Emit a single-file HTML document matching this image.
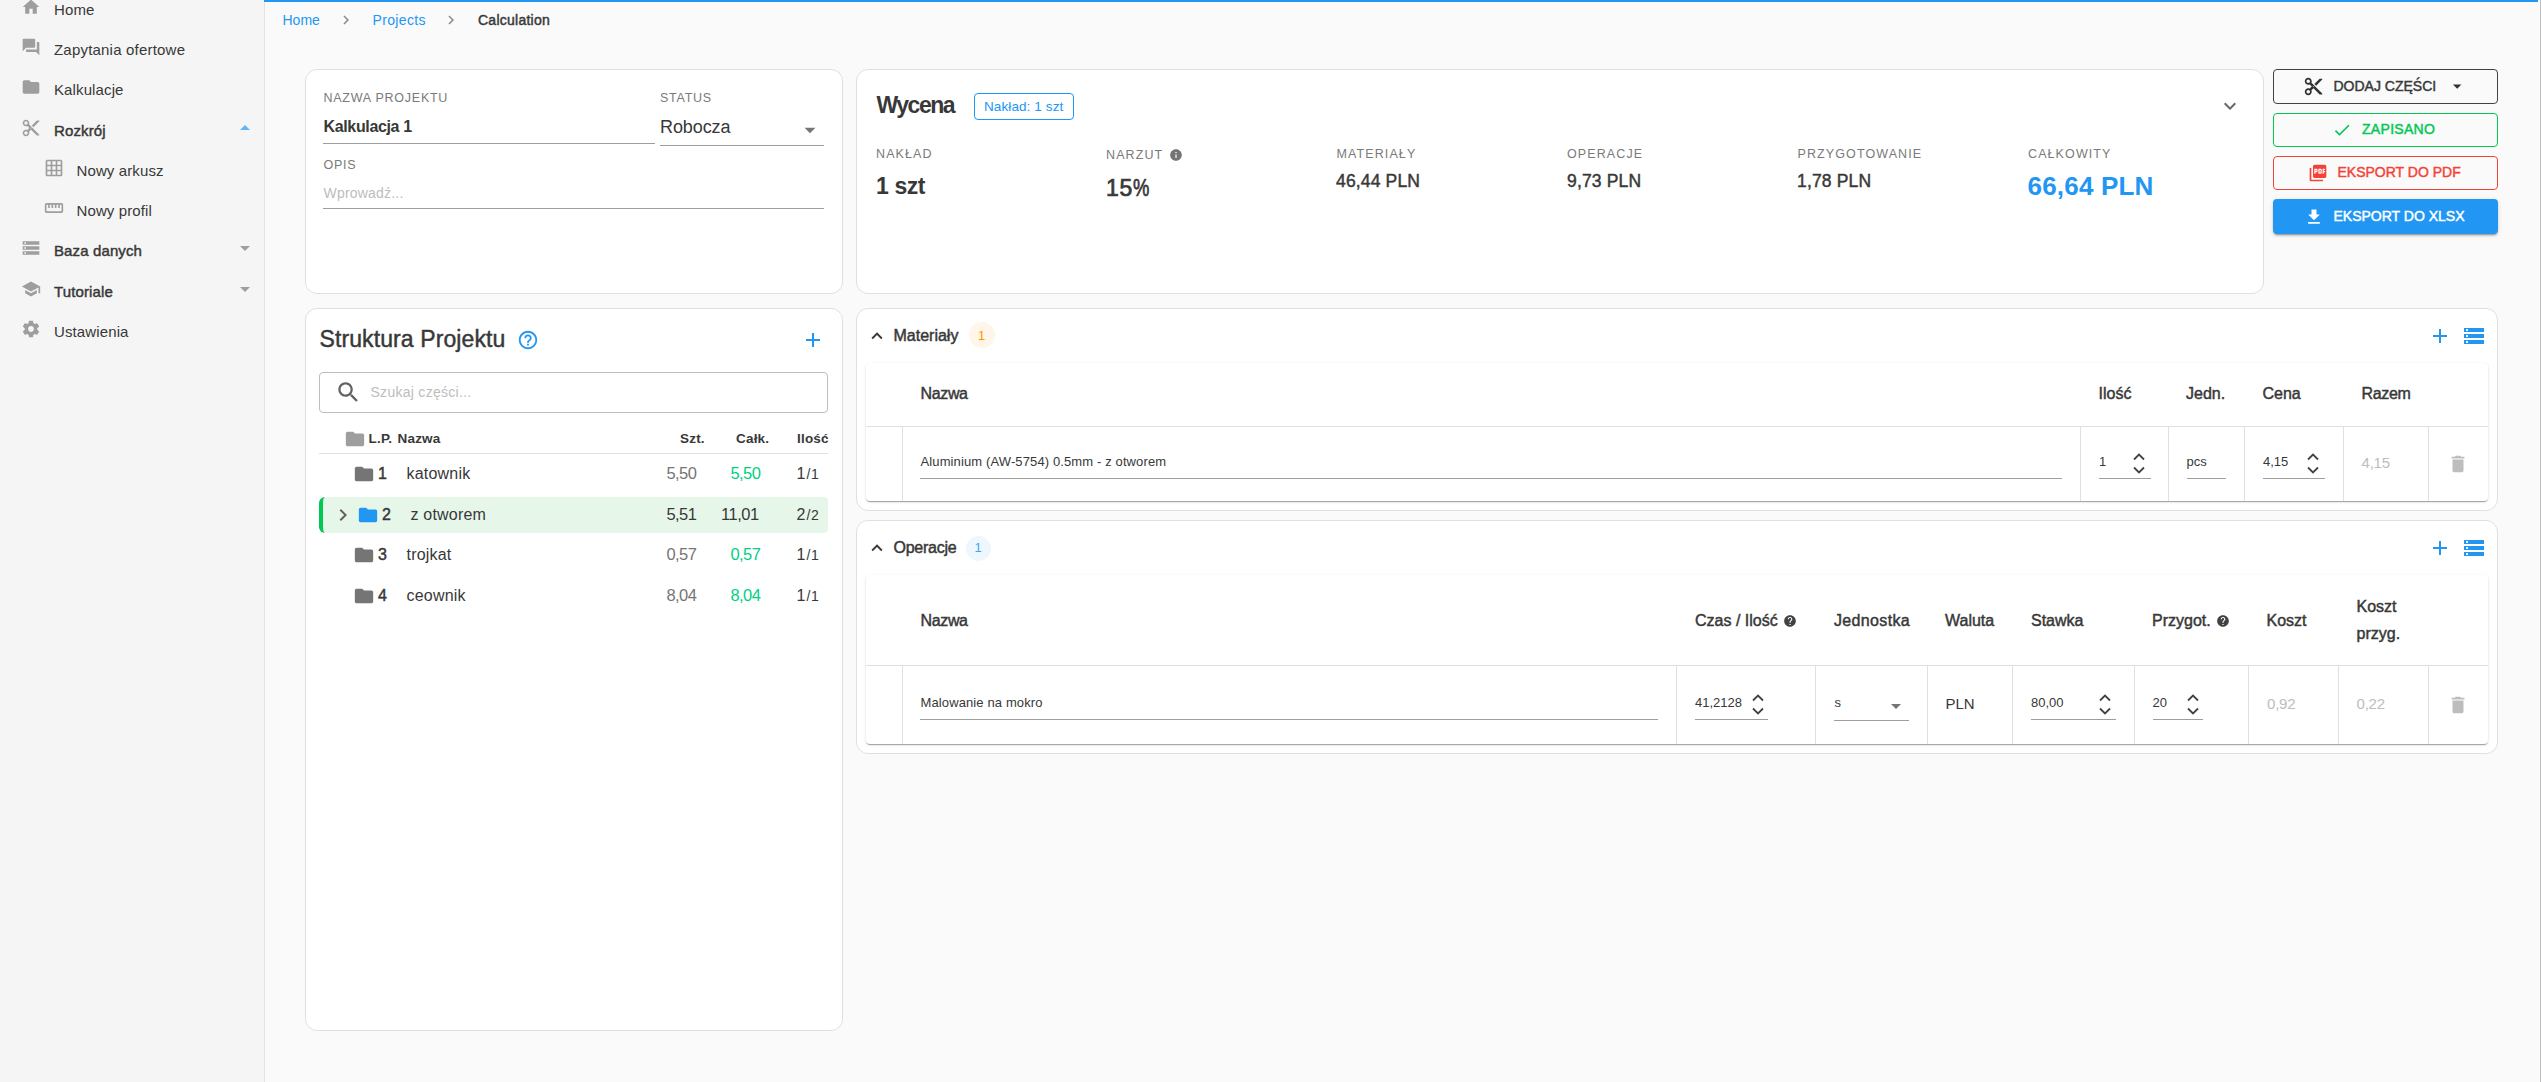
<!DOCTYPE html>
<html><head><meta charset="utf-8"><title>Calculation</title>
<style>
html,body{margin:0;padding:0;width:2541px;height:1082px;overflow:hidden;background:#fafafa;}
body{position:relative;font-family:"Liberation Sans",sans-serif;}
.t{position:absolute;white-space:nowrap;}
.b{position:absolute;}
</style></head><body>
<div class="b" style="left:0px;top:0px;width:264px;height:1082px;background:#f5f5f5;"></div>
<div class="b" style="left:264px;top:0px;width:1px;height:1082px;background:#e4e4e4;"></div>
<svg class="b" style="left:21px;top:-3.5px;" width="20" height="20" viewBox="0 0 24 24"><path fill="#9e9e9e" d="M10 20v-6h4v6h5v-8h3L12 3 2 12h3v8z"/></svg>
<div class="t " style="left:54px;top:0.80px;font-size:15px;line-height:18px;font-weight:400;color:#383838;letter-spacing:0.12px;">Home</div>
<svg class="b" style="left:21px;top:36.5px;" width="20" height="20" viewBox="0 0 24 24"><path fill="#9e9e9e" d="M21 6h-2v9H6v2c0 .55.45 1 1 1h11l4 4V7c0-.55-.45-1-1-1zm-4 6V3c0-.55-.45-1-1-1H3c-.55 0-1 .45-1 1v14l4-4h10c.55 0 1-.45 1-1z"/></svg>
<div class="t " style="left:54px;top:40.80px;font-size:15px;line-height:18px;font-weight:400;color:#383838;letter-spacing:0.2px;">Zapytania ofertowe</div>
<svg class="b" style="left:21px;top:76.5px;" width="20" height="20" viewBox="0 0 24 24"><path fill="#9e9e9e" d="M10 4H4c-1.1 0-1.99.9-1.99 2L2 18c0 1.1.9 2 2 2h16c1.1 0 2-.9 2-2V8c0-1.1-.9-2-2-2h-8l-2-2z"/></svg>
<div class="t " style="left:54px;top:80.80px;font-size:15px;line-height:18px;font-weight:400;color:#383838;letter-spacing:0.12px;">Kalkulacje</div>
<svg class="b" style="left:21px;top:117.5px;" width="20" height="20" viewBox="0 0 24 24"><path fill="#9e9e9e" d="M9.64 7.64c.23-.5.36-1.05.36-1.64 0-2.21-1.79-4-4-4S2 3.79 2 6s1.79 4 4 4c.59 0 1.14-.13 1.64-.36L10 12l-2.36 2.36C7.14 14.13 6.59 14 6 14c-2.21 0-4 1.79-4 4s1.79 4 4 4 4-1.79 4-4c0-.59-.13-1.14-.36-1.64L12 14l7 7h3v-1L9.64 7.64zM6 8c-1.1 0-2-.89-2-2s.9-2 2-2 2 .89 2 2-.9 2-2 2zm0 12c-1.1 0-2-.89-2-2s.9-2 2-2 2 .89 2 2-.9 2-2 2zm6-7.5c-.28 0-.5-.22-.5-.5s.22-.5.5-.5.5.22.5.5-.22.5-.5.5zM19 3l-6 6 2 2 7-7V3z"/></svg>
<div class="t " style="left:54px;top:121.80px;font-size:15px;line-height:18px;font-weight:400;color:#383838;letter-spacing:0.12px;-webkit-text-stroke:0.45px #383838;">Rozkrój</div>
<svg class="b" style="left:44px;top:157.5px;" width="20" height="20" viewBox="0 0 24 24"><path fill="#9e9e9e" d="M20 2H4c-1.1 0-2 .9-2 2v16c0 1.1.9 2 2 2h16c1.1 0 2-.9 2-2V4c0-1.1-.9-2-2-2zM8 20H4v-4h4v4zm0-6H4v-4h4v4zm0-6H4V4h4v4zm6 12h-4v-4h4v4zm0-6h-4v-4h4v4zm0-6h-4V4h4v4zm6 12h-4v-4h4v4zm0-6h-4v-4h4v4zm0-6h-4V4h4v4z"/></svg>
<div class="t " style="left:76.5px;top:161.80px;font-size:15px;line-height:18px;font-weight:400;color:#383838;letter-spacing:0.12px;">Nowy arkusz</div>
<svg class="b" style="left:44px;top:197.5px;" width="20" height="20" viewBox="0 0 24 24"><path fill="#9e9e9e" d="M21 6H3c-1.1 0-2 .9-2 2v8c0 1.1.9 2 2 2h18c1.1 0 2-.9 2-2V8c0-1.1-.9-2-2-2zm0 10H3V8h2v4h2V8h2v4h2V8h2v4h2V8h2v4h2V8h2v8z"/></svg>
<div class="t " style="left:76.5px;top:201.80px;font-size:15px;line-height:18px;font-weight:400;color:#383838;letter-spacing:0.12px;">Nowy profil</div>
<svg class="b" style="left:21px;top:237.5px;" width="20" height="20" viewBox="0 0 24 24"><path fill="#9e9e9e" d="M2 20h20v-4H2v4zm2-3h2v2H4v-2zM2 4v4h20V4H2zm4 3H4V5h2v2zm-4 7h20v-4H2v4zm2-3h2v2H4v-2z"/></svg>
<div class="t " style="left:54px;top:241.80px;font-size:15px;line-height:18px;font-weight:400;color:#383838;letter-spacing:0.12px;-webkit-text-stroke:0.45px #383838;">Baza danych</div>
<svg class="b" style="left:21px;top:278.5px;" width="20" height="20" viewBox="0 0 24 24"><path fill="#9e9e9e" d="M5 13.18v4L12 21l7-3.82v-4L12 17l-7-3.82zM12 3L1 9l11 6 9-4.91V17h2V9L12 3z"/></svg>
<div class="t " style="left:54px;top:282.80px;font-size:15px;line-height:18px;font-weight:400;color:#383838;letter-spacing:0.12px;-webkit-text-stroke:0.45px #383838;">Tutoriale</div>
<svg class="b" style="left:21px;top:318.5px;" width="20" height="20" viewBox="0 0 24 24"><path fill="#9e9e9e" d="M19.43 12.98c.04-.32.07-.64.07-.98s-.03-.66-.07-.98l2.11-1.65c.19-.15.24-.42.12-.64l-2-3.46c-.12-.22-.39-.3-.61-.22l-2.49 1c-.52-.4-1.08-.73-1.69-.98l-.38-2.65C14.46 2.18 14.25 2 14 2h-4c-.25 0-.46.18-.49.42l-.38 2.65c-.61.25-1.17.59-1.69.98l-2.49-1c-.23-.09-.49 0-.61.22l-2 3.46c-.13.22-.07.49.12.64l2.11 1.65c-.04.32-.07.65-.07.98s.03.66.07.98l-2.11 1.65c-.19.15-.24.42-.12.64l2 3.46c.12.22.39.3.61.22l2.49-1c.52.4 1.08.73 1.69.98l.38 2.65c.03.24.24.42.49.42h4c.25 0 .46-.18.49-.42l.38-2.65c.61-.25 1.17-.59 1.69-.98l2.49 1c.23.09.49 0 .61-.22l2-3.46c.12-.22.07-.49-.12-.64l-2.11-1.65zM12 15.5c-1.93 0-3.5-1.57-3.5-3.5s1.57-3.5 3.5-3.5 3.5 1.57 3.5 3.5-1.57 3.5-3.5 3.5z"/></svg>
<div class="t " style="left:54px;top:322.80px;font-size:15px;line-height:18px;font-weight:400;color:#383838;letter-spacing:0.12px;">Ustawienia</div>
<svg class="b" style="left:233px;top:115.5px;" width="24" height="24" viewBox="0 0 24 24"><path fill="#64b5f6" d="M7 14l5-5 5 5z"/></svg>
<svg class="b" style="left:233px;top:236px;" width="24" height="24" viewBox="0 0 24 24"><path fill="#9e9e9e" d="M7 10l5 5 5-5z"/></svg>
<svg class="b" style="left:233px;top:277px;" width="24" height="24" viewBox="0 0 24 24"><path fill="#9e9e9e" d="M7 10l5 5 5-5z"/></svg>
<div class="b" style="left:265px;top:0px;width:2276px;height:1082px;background:#fafafa;"></div>
<div class="b" style="left:264px;top:0px;width:2274px;height:2px;background:#2196f3;"></div>
<div class="b" style="left:2540px;top:0px;width:1px;height:1082px;background:#bfbfbf;"></div>
<div class="t " style="left:282.5px;top:11.65px;font-size:14px;line-height:17px;font-weight:400;color:#2196f3;letter-spacing:0px;">Home</div>
<svg class="b" style="left:337px;top:11px;" width="18" height="18" viewBox="0 0 24 24"><path fill="#8a8a8a" d="M10 6L8.59 7.41 13.17 12l-4.58 4.59L10 18l6-6z"/></svg>
<div class="t " style="left:372.5px;top:11.65px;font-size:14px;line-height:17px;font-weight:400;color:#2196f3;letter-spacing:0.35px;">Projects</div>
<svg class="b" style="left:442px;top:11px;" width="18" height="18" viewBox="0 0 24 24"><path fill="#8a8a8a" d="M10 6L8.59 7.41 13.17 12l-4.58 4.59L10 18l6-6z"/></svg>
<div class="t " style="left:478px;top:11.65px;font-size:14px;line-height:17px;font-weight:400;color:#383838;letter-spacing:0.25px;-webkit-text-stroke:0.45px #383838;">Calculation</div>
<div class="b" style="left:305px;top:69px;width:538px;height:225px;background:#fff;border:1px solid #e0e0e0;border-radius:12px;box-sizing:border-box;"></div>
<div class="t " style="left:323.5px;top:91.17px;font-size:12.5px;line-height:15px;font-weight:400;color:#7a7a7a;letter-spacing:0.75px;">NAZWA PROJEKTU</div>
<div class="t " style="left:323.5px;top:116.96px;font-size:16px;line-height:19px;font-weight:700;color:#383838;letter-spacing:-0.35px;">Kalkulacja 1</div>
<div class="b" style="left:323px;top:143px;width:332px;height:1px;background:#9e9e9e;"></div>
<div class="t " style="left:660px;top:91.17px;font-size:12.5px;line-height:15px;font-weight:400;color:#7a7a7a;letter-spacing:0.75px;">STATUS</div>
<div class="t " style="left:660px;top:115.76px;font-size:18px;line-height:22px;font-weight:400;color:#383838;letter-spacing:-0.1px;">Robocza</div>
<svg class="b" style="left:797.3px;top:117px;" width="26" height="26" viewBox="0 0 24 24"><path fill="#757575" d="M7 10l5 5 5-5z"/></svg>
<div class="b" style="left:660px;top:145px;width:164px;height:1px;background:#9e9e9e;"></div>
<div class="t " style="left:323.5px;top:158.17px;font-size:12.5px;line-height:15px;font-weight:400;color:#7a7a7a;letter-spacing:0.75px;">OPIS</div>
<div class="t " style="left:323.5px;top:184.65px;font-size:14px;line-height:17px;font-weight:400;color:#bdbdbd;letter-spacing:0.2px;">Wprowadź...</div>
<div class="b" style="left:323px;top:208px;width:501px;height:1px;background:#9e9e9e;"></div>
<div class="b" style="left:856px;top:69px;width:1408px;height:225px;background:#fff;border:1px solid #e0e0e0;border-radius:12px;box-sizing:border-box;"></div>
<div class="t " style="left:876.5px;top:91.03px;font-size:23px;line-height:28px;font-weight:700;color:#383838;letter-spacing:-1.5px;">Wycena</div>
<div class="b" style="left:974px;top:93px;width:100px;height:27px;border:1px solid #2196f3;border-radius:4px;box-sizing:border-box;"></div>
<div class="t " style="left:984px;top:98.92px;font-size:13.5px;line-height:16px;font-weight:400;color:#2196f3;letter-spacing:0.1px;">Nakład: 1 szt</div>
<svg class="b" style="left:2218px;top:94px;" width="24" height="24" viewBox="0 0 24 24"><path fill="#666" d="M16.59 8.59L12 13.17 7.41 8.59 6 10l6 6 6-6z"/></svg>
<div class="t " style="left:876px;top:146.77px;font-size:12.5px;line-height:15px;font-weight:400;color:#7a7a7a;letter-spacing:1.1px;">NAKŁAD</div>
<div class="t " style="left:1106px;top:147.77px;font-size:12.5px;line-height:15px;font-weight:400;color:#7a7a7a;letter-spacing:1.1px;">NARZUT</div>
<div class="t " style="left:1336.5px;top:146.77px;font-size:12.5px;line-height:15px;font-weight:400;color:#7a7a7a;letter-spacing:1.1px;">MATERIAŁY</div>
<div class="t " style="left:1567px;top:146.77px;font-size:12.5px;line-height:15px;font-weight:400;color:#7a7a7a;letter-spacing:1.1px;">OPERACJE</div>
<div class="t " style="left:1797.5px;top:146.77px;font-size:12.5px;line-height:15px;font-weight:400;color:#7a7a7a;letter-spacing:1.1px;">PRZYGOTOWANIE</div>
<div class="t " style="left:2028px;top:146.77px;font-size:12.5px;line-height:15px;font-weight:400;color:#7a7a7a;letter-spacing:1.1px;">CAŁKOWITY</div>
<svg class="b" style="left:1169px;top:148px;" width="14" height="14" viewBox="0 0 24 24"><path fill="#757575" d="M12 2C6.48 2 2 6.48 2 12s4.48 10 10 10 10-4.48 10-10S17.52 2 12 2zm1 15h-2v-6h2v6zm0-8h-2V7h2v2z"/></svg>
<div class="t " style="left:876px;top:171.53px;font-size:23px;line-height:28px;font-weight:700;color:#383838;letter-spacing:-0.4px;">1 szt</div>
<div class="t " style="left:1106px;top:173.53px;font-size:23px;line-height:28px;font-weight:400;color:#383838;letter-spacing:0.8px;-webkit-text-stroke:0.7px #383838;">15<span style="display:inline-block;transform:scaleX(0.8);transform-origin:0 0;letter-spacing:0">%</span></div>
<div class="t " style="left:1336px;top:171.44px;font-size:17.5px;line-height:21px;font-weight:400;color:#383838;letter-spacing:0.15px;-webkit-text-stroke:0.45px #383838;">46,44 PLN</div>
<div class="t " style="left:1567px;top:171.44px;font-size:17.5px;line-height:21px;font-weight:400;color:#383838;letter-spacing:0.15px;-webkit-text-stroke:0.45px #383838;">9,73 PLN</div>
<div class="t " style="left:1797px;top:171.44px;font-size:17.5px;line-height:21px;font-weight:400;color:#383838;letter-spacing:0.15px;-webkit-text-stroke:0.45px #383838;">1,78 PLN</div>
<div class="t " style="left:2027.5px;top:170.99px;font-size:26px;line-height:31px;font-weight:700;color:#2196f3;letter-spacing:0.2px;">66,64 PLN</div>
<div class="b" style="left:2273px;top:69px;width:225px;height:35px;border-radius:4px;box-sizing:border-box;border:1px solid #424242;"></div>
<svg class="b" style="left:2303px;top:76px;" width="21" height="21" viewBox="0 0 24 24"><path fill="#333" d="M9.64 7.64c.23-.5.36-1.05.36-1.64 0-2.21-1.79-4-4-4S2 3.79 2 6s1.79 4 4 4c.59 0 1.14-.13 1.64-.36L10 12l-2.36 2.36C7.14 14.13 6.59 14 6 14c-2.21 0-4 1.79-4 4s1.79 4 4 4 4-1.79 4-4c0-.59-.13-1.14-.36-1.64L12 14l7 7h3v-1L9.64 7.64zM6 8c-1.1 0-2-.89-2-2s.9-2 2-2 2 .89 2 2-.9 2-2 2zm0 12c-1.1 0-2-.89-2-2s.9-2 2-2 2 .89 2 2-.9 2-2 2zm6-7.5c-.28 0-.5-.22-.5-.5s.22-.5.5-.5.5.22.5.5-.22.5-.5.5zM19 3l-6 6 2 2 7-7V3z"/></svg>
<div class="t " style="left:2333.5px;top:77.65px;font-size:14px;line-height:17px;font-weight:400;color:#383838;letter-spacing:0px;-webkit-text-stroke:0.45px #383838;">DODAJ CZĘŚCI</div>
<svg class="b" style="left:2446.5px;top:75.5px;" width="20.4" height="20.4" viewBox="0 0 24 24"><path fill="#333" d="M7 10l5 5 5-5z"/></svg>
<div class="b" style="left:2273px;top:113px;width:225px;height:34px;border-radius:4px;box-sizing:border-box;border:1px solid #00c853;"></div>
<svg class="b" style="left:2332px;top:120px;" width="20" height="20" viewBox="0 0 24 24"><path fill="#00c853" d="M9 16.17L4.83 12l-1.42 1.41L9 19 21 7l-1.41-1.41z"/></svg>
<div class="t " style="left:2362px;top:120.65px;font-size:14px;line-height:17px;font-weight:400;color:#00c853;letter-spacing:0.3px;-webkit-text-stroke:0.45px #00c853;">ZAPISANO</div>
<div class="b" style="left:2273px;top:156px;width:225px;height:34px;border-radius:4px;box-sizing:border-box;border:1px solid #f44336;"></div>
<svg class="b" style="left:2308px;top:163px;" width="20" height="20" viewBox="0 0 24 24"><path fill="#f44336" d="M20 2H8c-1.1 0-2 .9-2 2v12c0 1.1.9 2 2 2h12c1.1 0 2-.9 2-2V4c0-1.1-.9-2-2-2zm-8.5 7.5c0 .83-.67 1.5-1.5 1.5H9v2H7.5V7H10c.83 0 1.5.67 1.5 1.5v1zm5 2c0 .83-.67 1.5-1.5 1.5h-2.5V7H15c.83 0 1.5.67 1.5 1.5v3zm4-3H19v1h1.5V11H19v2h-1.5V7h3v1.5zM9 9.5h1v-1H9v1zM4 6H2v14c0 1.1.9 2 2 2h14v-2H4V6zm10 5.5h1v-3h-1v3z"/></svg>
<div class="t " style="left:2337.5px;top:164.15px;font-size:14px;line-height:17px;font-weight:400;color:#f44336;letter-spacing:0px;-webkit-text-stroke:0.45px #f44336;">EKSPORT DO PDF</div>
<div class="b" style="left:2273px;top:199px;width:225px;height:35px;border-radius:4px;box-sizing:border-box;background:#2196f3;box-shadow:0px 3px 1px -2px rgba(0,0,0,0.2),0px 2px 2px 0px rgba(0,0,0,0.14),0px 1px 5px 0px rgba(0,0,0,0.12);"></div>
<svg class="b" style="left:2304px;top:207px;" width="20" height="20" viewBox="0 0 24 24"><path fill="#fff" d="M19 9h-4V3H9v6H5l7 7 7-7zM5 18v2h14v-2H5z"/></svg>
<div class="t " style="left:2333.5px;top:207.65px;font-size:14px;line-height:17px;font-weight:400;color:#fff;letter-spacing:0px;-webkit-text-stroke:0.45px #fff;">EKSPORT DO XLSX</div>
<div class="b" style="left:305px;top:308px;width:538px;height:723px;background:#fff;border:1px solid #e0e0e0;border-radius:12px;box-sizing:border-box;"></div>
<div class="t " style="left:319.5px;top:324.53px;font-size:23px;line-height:28px;font-weight:400;color:#383838;letter-spacing:0.1px;-webkit-text-stroke:0.45px #383838;">Struktura Projektu</div>
<svg class="b" style="left:517px;top:329px;" width="22" height="22" viewBox="0 0 24 24"><path fill="#2196f3" d="M11 18h2v-2h-2v2zm1-16C6.48 2 2 6.48 2 12s4.48 10 10 10 10-4.48 10-10S17.52 2 12 2zm0 18c-4.41 0-8-3.59-8-8s3.59-8 8-8 8 3.59 8 8-3.59 8-8 8zm0-14c-2.21 0-4 1.790-4 4h2c0-1.1.9-2 2-2s2 .9 2 2c0 2-3 1.75-3 5h2c0-2.25 3-2.5 3-5 0-2.21-1.79-4-4-4z"/></svg>
<svg class="b" style="left:801px;top:328px;" width="24" height="24" viewBox="0 0 24 24"><path fill="#2196f3" d="M19 13h-6v6h-2v-6H5v-2h6V5h2v6h6v2z"/></svg>
<div class="b" style="left:319px;top:372px;width:509px;height:41px;border:1px solid #bdbdbd;border-radius:4px;box-sizing:border-box;"></div>
<svg class="b" style="left:335.2px;top:379.2px;" width="26.7" height="26.7" viewBox="0 0 24 24"><path fill="#616161" d="M15.5 14h-.79l-.28-.27C15.41 12.59 16 11.11 16 9.5 16 5.91 13.09 3 9.5 3S3 5.910 3 9.5 5.91 16 9.5 16c1.61 0 3.09-.59 4.23-1.57l.27.28v.79l5 4.99L20.49 19l-4.99-5zm-6 0C7.01 14 5 11.99 5 9.5S7.01 5 9.5 5 14 7.01 14 9.5 11.99 14 9.5 14z"/></svg>
<div class="t " style="left:370.5px;top:383.65px;font-size:14px;line-height:17px;font-weight:400;color:#bdbdbd;letter-spacing:0.28px;">Szukaj części...</div>
<svg class="b" style="left:343.5px;top:428px;" width="22" height="22" viewBox="0 0 24 24"><path fill="#9e9e9e" d="M10 4H4c-1.1 0-1.99.9-1.99 2L2 18c0 1.1.9 2 2 2h16c1.1 0 2-.9 2-2V8c0-1.1-.9-2-2-2h-8l-2-2z"/></svg>
<div class="t " style="left:368.5px;top:430.82px;font-size:13.5px;line-height:16px;font-weight:700;color:#383838;letter-spacing:0.2px;">L.P.</div>
<div class="t " style="left:397.5px;top:430.82px;font-size:13.5px;line-height:16px;font-weight:700;color:#383838;letter-spacing:0.2px;">Nazwa</div>
<div class="t " style="left:680px;top:430.82px;font-size:13.5px;line-height:16px;font-weight:700;color:#383838;letter-spacing:0.2px;">Szt.</div>
<div class="t " style="left:736px;top:430.82px;font-size:13.5px;line-height:16px;font-weight:700;color:#383838;letter-spacing:0.2px;">Całk.</div>
<div class="t " style="left:797px;top:430.82px;font-size:13.5px;line-height:16px;font-weight:700;color:#383838;letter-spacing:0.2px;">Ilość</div>
<div class="b" style="left:319px;top:453px;width:509px;height:1px;background:#e0e0e0;"></div>
<div class="b" style="left:319px;top:497px;width:509px;height:36px;background:#e6f7ea;border-radius:6px 4px 4px 6px;border-left:4px solid #00c853;box-sizing:border-box;"></div>
<svg class="b" style="left:353px;top:463px;" width="22" height="22" viewBox="0 0 24 24"><path fill="#757575" d="M10 4H4c-1.1 0-1.99.9-1.99 2L2 18c0 1.1.9 2 2 2h16c1.1 0 2-.9 2-2V8c0-1.1-.9-2-2-2h-8l-2-2z"/></svg>
<div class="t " style="left:378px;top:463.96px;font-size:16px;line-height:19px;font-weight:400;color:#383838;letter-spacing:0px;-webkit-text-stroke:0.45px #383838;">1</div>
<div class="t " style="left:406.5px;top:463.96px;font-size:16px;line-height:19px;font-weight:400;color:#383838;letter-spacing:0.2px;">katownik</div>
<div class="t " style="left:666.5px;top:463.28px;font-size:16.5px;line-height:20px;font-weight:400;color:#757575;letter-spacing:-0.6px;">5,50</div>
<div class="t " style="left:730.5px;top:463.28px;font-size:16.5px;line-height:20px;font-weight:400;color:#00d084;letter-spacing:-0.6px;">5,50</div>
<div class="t " style="left:796.5px;top:463.96px;font-size:16px;line-height:19px;font-weight:400;color:#383838;letter-spacing:0px;">1<span style="font-size:14px;letter-spacing:0.6px;margin-left:1px">/1</span></div>
<svg class="b" style="left:357px;top:504px;" width="22" height="22" viewBox="0 0 24 24"><path fill="#2196f3" d="M10 4H4c-1.1 0-1.99.9-1.99 2L2 18c0 1.1.9 2 2 2h16c1.1 0 2-.9 2-2V8c0-1.1-.9-2-2-2h-8l-2-2z"/></svg>
<div class="t " style="left:382px;top:504.96px;font-size:16px;line-height:19px;font-weight:400;color:#383838;letter-spacing:0px;-webkit-text-stroke:0.45px #383838;">2</div>
<div class="t " style="left:410.5px;top:504.96px;font-size:16px;line-height:19px;font-weight:400;color:#383838;letter-spacing:0.2px;">z otworem</div>
<div class="t " style="left:666.5px;top:504.28px;font-size:16.5px;line-height:20px;font-weight:400;color:#383838;letter-spacing:-0.6px;">5,51</div>
<div class="t " style="left:721px;top:504.28px;font-size:16.5px;line-height:20px;font-weight:400;color:#383838;letter-spacing:-0.5px;">11,01</div>
<div class="t " style="left:796.5px;top:504.96px;font-size:16px;line-height:19px;font-weight:400;color:#383838;letter-spacing:0px;">2<span style="font-size:14px;letter-spacing:0.6px;margin-left:1px">/2</span></div>
<svg class="b" style="left:353px;top:544px;" width="22" height="22" viewBox="0 0 24 24"><path fill="#757575" d="M10 4H4c-1.1 0-1.99.9-1.99 2L2 18c0 1.1.9 2 2 2h16c1.1 0 2-.9 2-2V8c0-1.1-.9-2-2-2h-8l-2-2z"/></svg>
<div class="t " style="left:378px;top:544.96px;font-size:16px;line-height:19px;font-weight:400;color:#383838;letter-spacing:0px;-webkit-text-stroke:0.45px #383838;">3</div>
<div class="t " style="left:406.5px;top:544.96px;font-size:16px;line-height:19px;font-weight:400;color:#383838;letter-spacing:0.2px;">trojkat</div>
<div class="t " style="left:666.5px;top:544.28px;font-size:16.5px;line-height:20px;font-weight:400;color:#757575;letter-spacing:-0.6px;">0,57</div>
<div class="t " style="left:730.5px;top:544.28px;font-size:16.5px;line-height:20px;font-weight:400;color:#00d084;letter-spacing:-0.6px;">0,57</div>
<div class="t " style="left:796.5px;top:544.96px;font-size:16px;line-height:19px;font-weight:400;color:#383838;letter-spacing:0px;">1<span style="font-size:14px;letter-spacing:0.6px;margin-left:1px">/1</span></div>
<svg class="b" style="left:353px;top:585px;" width="22" height="22" viewBox="0 0 24 24"><path fill="#757575" d="M10 4H4c-1.1 0-1.99.9-1.99 2L2 18c0 1.1.9 2 2 2h16c1.1 0 2-.9 2-2V8c0-1.1-.9-2-2-2h-8l-2-2z"/></svg>
<div class="t " style="left:378px;top:585.96px;font-size:16px;line-height:19px;font-weight:400;color:#383838;letter-spacing:0px;-webkit-text-stroke:0.45px #383838;">4</div>
<div class="t " style="left:406.5px;top:585.96px;font-size:16px;line-height:19px;font-weight:400;color:#383838;letter-spacing:0.2px;">ceownik</div>
<div class="t " style="left:666.5px;top:585.28px;font-size:16.5px;line-height:20px;font-weight:400;color:#757575;letter-spacing:-0.6px;">8,04</div>
<div class="t " style="left:730.5px;top:585.28px;font-size:16.5px;line-height:20px;font-weight:400;color:#00d084;letter-spacing:-0.6px;">8,04</div>
<div class="t " style="left:796.5px;top:585.96px;font-size:16px;line-height:19px;font-weight:400;color:#383838;letter-spacing:0px;">1<span style="font-size:14px;letter-spacing:0.6px;margin-left:1px">/1</span></div>
<svg class="b" style="left:331px;top:503px;" width="24" height="24" viewBox="0 0 24 24"><path fill="#616161" d="M10 6L8.59 7.41 13.17 12l-4.58 4.59L10 18l6-6z"/></svg>
<div class="b" style="left:856px;top:308px;width:1642px;height:203px;background:#fff;border:1px solid #e0e0e0;border-radius:12px;box-sizing:border-box;"></div>
<svg class="b" style="left:866px;top:325px;" width="22" height="22" viewBox="0 0 24 24"><path fill="#383838" d="M12 8l-6 6 1.41 1.41L12 10.83l4.59 4.58L18 14z"/></svg>
<div class="t " style="left:893.5px;top:325.96px;font-size:16px;line-height:19px;font-weight:400;color:#383838;letter-spacing:0px;-webkit-text-stroke:0.45px #383838;">Materiały</div>
<div class="b" style="left:969px;top:322px;width:26px;height:26px;background:#fff5e8;border-radius:50%;"></div>
<div class="t " style="left:978px;top:327.50px;font-size:13px;line-height:16px;font-weight:400;color:#ff9800;letter-spacing:0px;">1</div>
<svg class="b" style="left:2427.5px;top:324px;" width="24" height="24" viewBox="0 0 24 24"><path fill="#2196f3" d="M19 13h-6v6h-2v-6H5v-2h6V5h2v6h6v2z"/></svg>
<svg class="b" style="left:2461.5px;top:324px;" width="24" height="24" viewBox="0 0 24 24"><path fill="#2196f3" d="M2 20h20v-4H2v4zm2-3h2v2H4v-2zM2 4v4h20V4H2zm4 3H4V5h2v2zm-4 7h20v-4H2v4zm2-3h2v2H4v-2z"/></svg>
<div class="b" style="left:866px;top:363px;width:1622px;height:138px;background:#fff;border-radius:4px;box-shadow:0px 2px 1px -1px rgba(0,0,0,0.2),0px 1px 1px 0px rgba(0,0,0,0.14),0px 1px 3px 0px rgba(0,0,0,0.12);"></div>
<div class="t " style="left:920.5px;top:383.96px;font-size:16px;line-height:19px;font-weight:400;color:#383838;letter-spacing:-0.35px;-webkit-text-stroke:0.45px #383838;">Nazwa</div>
<div class="t " style="left:2098.5px;top:383.96px;font-size:16px;line-height:19px;font-weight:400;color:#383838;letter-spacing:0px;-webkit-text-stroke:0.45px #383838;">Ilość</div>
<div class="t " style="left:2186px;top:383.96px;font-size:16px;line-height:19px;font-weight:400;color:#383838;letter-spacing:0px;-webkit-text-stroke:0.45px #383838;">Jedn.</div>
<div class="t " style="left:2262.5px;top:383.96px;font-size:16px;line-height:19px;font-weight:400;color:#383838;letter-spacing:0px;-webkit-text-stroke:0.45px #383838;">Cena</div>
<div class="t " style="left:2361.5px;top:383.96px;font-size:16px;line-height:19px;font-weight:400;color:#383838;letter-spacing:-0.35px;-webkit-text-stroke:0.45px #383838;">Razem</div>
<div class="b" style="left:866px;top:426px;width:1622px;height:1px;background:#e0e0e0;"></div>
<div class="b" style="left:902px;top:427px;width:1px;height:74px;background:#e0e0e0;"></div>
<div class="b" style="left:2080px;top:427px;width:1px;height:74px;background:#e0e0e0;"></div>
<div class="b" style="left:2168px;top:427px;width:1px;height:74px;background:#e0e0e0;"></div>
<div class="b" style="left:2244px;top:427px;width:1px;height:74px;background:#e0e0e0;"></div>
<div class="b" style="left:2343px;top:427px;width:1px;height:74px;background:#e0e0e0;"></div>
<div class="b" style="left:2428px;top:427px;width:1px;height:74px;background:#e0e0e0;"></div>
<div class="t " style="left:920.5px;top:453.50px;font-size:13px;line-height:16px;font-weight:400;color:#383838;letter-spacing:0.12px;">Aluminium (AW-5754) 0.5mm - z otworem</div>
<div class="b" style="left:920px;top:478px;width:1142px;height:1px;background:#9e9e9e;"></div>
<div class="t " style="left:2099px;top:453.50px;font-size:13px;line-height:16px;font-weight:400;color:#383838;letter-spacing:0px;">1</div>
<div class="b" style="left:2099px;top:478px;width:52px;height:1px;background:#9e9e9e;"></div>
<div class="t " style="left:2186.5px;top:453.50px;font-size:13px;line-height:16px;font-weight:400;color:#383838;letter-spacing:0px;">pcs</div>
<div class="b" style="left:2187px;top:478px;width:39px;height:1px;background:#9e9e9e;"></div>
<div class="t " style="left:2263px;top:453.50px;font-size:13px;line-height:16px;font-weight:400;color:#383838;letter-spacing:0px;">4,15</div>
<div class="b" style="left:2263px;top:478px;width:62px;height:1px;background:#9e9e9e;"></div>
<svg class="b" style="left:2132.5px;top:453px;" width="12" height="22" viewBox="0 0 12 22"><path fill="none" stroke="#424242" stroke-width="1.8" d="M1 6.5L6 1.5L11 6.5M1 14.5L6 19.5L11 14.5"/></svg>
<svg class="b" style="left:2307px;top:453px;" width="12" height="22" viewBox="0 0 12 22"><path fill="none" stroke="#424242" stroke-width="1.8" d="M1 6.5L6 1.5L11 6.5M1 14.5L6 19.5L11 14.5"/></svg>
<div class="t " style="left:2361.5px;top:454.30px;font-size:15px;line-height:18px;font-weight:400;color:#bdbdbd;letter-spacing:-0.2px;">4,15</div>
<svg class="b" style="left:2447.4px;top:453.2px;" width="22" height="22" viewBox="0 0 24 24"><path fill="#bdbdbd" d="M6 19c0 1.1.9 2 2 2h8c1.1 0 2-.9 2-2V7H6v12zM19 4h-3.5l-1-1h-5l-1 1H5v2h14V4z"/></svg>
<div class="b" style="left:856px;top:520px;width:1642px;height:234px;background:#fff;border:1px solid #e0e0e0;border-radius:12px;box-sizing:border-box;"></div>
<svg class="b" style="left:866px;top:537px;" width="22" height="22" viewBox="0 0 24 24"><path fill="#383838" d="M12 8l-6 6 1.41 1.41L12 10.83l4.59 4.58L18 14z"/></svg>
<div class="t " style="left:893.5px;top:537.96px;font-size:16px;line-height:19px;font-weight:400;color:#383838;letter-spacing:-0.25px;-webkit-text-stroke:0.45px #383838;">Operacje</div>
<div class="b" style="left:966px;top:535.5px;width:25px;height:25px;background:#eef6fe;border-radius:50%;"></div>
<div class="t " style="left:974.5px;top:540.00px;font-size:13px;line-height:16px;font-weight:400;color:#42a5f5;letter-spacing:0px;">1</div>
<svg class="b" style="left:2427.5px;top:536px;" width="24" height="24" viewBox="0 0 24 24"><path fill="#2196f3" d="M19 13h-6v6h-2v-6H5v-2h6V5h2v6h6v2z"/></svg>
<svg class="b" style="left:2461.5px;top:536px;" width="24" height="24" viewBox="0 0 24 24"><path fill="#2196f3" d="M2 20h20v-4H2v4zm2-3h2v2H4v-2zM2 4v4h20V4H2zm4 3H4V5h2v2zm-4 7h20v-4H2v4zm2-3h2v2H4v-2z"/></svg>
<div class="b" style="left:866px;top:575px;width:1622px;height:169px;background:#fff;border-radius:4px;box-shadow:0px 2px 1px -1px rgba(0,0,0,0.2),0px 1px 1px 0px rgba(0,0,0,0.14),0px 1px 3px 0px rgba(0,0,0,0.12);"></div>
<div class="t " style="left:920.5px;top:611.16px;font-size:16px;line-height:19px;font-weight:400;color:#383838;letter-spacing:-0.35px;-webkit-text-stroke:0.45px #383838;">Nazwa</div>
<div class="t " style="left:1695px;top:611.16px;font-size:16px;line-height:19px;font-weight:400;color:#383838;letter-spacing:0px;-webkit-text-stroke:0.45px #383838;">Czas / Ilość</div>
<div class="t " style="left:1834px;top:611.16px;font-size:16px;line-height:19px;font-weight:400;color:#383838;letter-spacing:0.35px;-webkit-text-stroke:0.45px #383838;">Jednostka</div>
<div class="t " style="left:1945px;top:611.16px;font-size:16px;line-height:19px;font-weight:400;color:#383838;letter-spacing:0px;-webkit-text-stroke:0.45px #383838;">Waluta</div>
<div class="t " style="left:2031px;top:611.16px;font-size:16px;line-height:19px;font-weight:400;color:#383838;letter-spacing:0px;-webkit-text-stroke:0.45px #383838;">Stawka</div>
<div class="t " style="left:2152px;top:611.16px;font-size:16px;line-height:19px;font-weight:400;color:#383838;letter-spacing:0px;-webkit-text-stroke:0.45px #383838;">Przygot.</div>
<div class="t " style="left:2266.5px;top:611.16px;font-size:16px;line-height:19px;font-weight:400;color:#383838;letter-spacing:0px;-webkit-text-stroke:0.45px #383838;">Koszt</div>
<div class="t " style="left:2356.5px;top:596.96px;font-size:16px;line-height:19px;font-weight:400;color:#383838;letter-spacing:0px;-webkit-text-stroke:0.45px #383838;">Koszt</div>
<div class="t " style="left:2356.5px;top:623.96px;font-size:16px;line-height:19px;font-weight:400;color:#383838;letter-spacing:0px;-webkit-text-stroke:0.45px #383838;">przyg.</div>
<svg class="b" style="left:1783px;top:614px;" width="14" height="14" viewBox="0 0 24 24"><path fill="#424242" d="M12 2C6.48 2 2 6.48 2 12s4.48 10 10 10 10-4.48 10-10S17.52 2 12 2zm1 17h-2v-2h2v2zm2.07-7.75l-.9.92C13.45 12.9 13 13.5 13 15h-2v-.5c0-1.1.45-2.1 1.17-2.83l1.24-1.26c.37-.36.59-.86.59-1.41 0-1.1-.9-2-2-2s-2 .9-2 2H8c0-2.21 1.79-4 4-4s4 1.79 4 4c0 .88-.36 1.68-.93 2.25z"/></svg>
<svg class="b" style="left:2216px;top:614px;" width="14" height="14" viewBox="0 0 24 24"><path fill="#424242" d="M12 2C6.48 2 2 6.48 2 12s4.48 10 10 10 10-4.48 10-10S17.52 2 12 2zm1 17h-2v-2h2v2zm2.07-7.75l-.9.92C13.45 12.9 13 13.5 13 15h-2v-.5c0-1.1.45-2.1 1.17-2.83l1.24-1.26c.37-.36.59-.86.59-1.41 0-1.1-.9-2-2-2s-2 .9-2 2H8c0-2.21 1.79-4 4-4s4 1.79 4 4c0 .88-.36 1.68-.93 2.25z"/></svg>
<div class="b" style="left:866px;top:665px;width:1622px;height:1px;background:#e0e0e0;"></div>
<div class="b" style="left:902px;top:666px;width:1px;height:78px;background:#e0e0e0;"></div>
<div class="b" style="left:1676px;top:666px;width:1px;height:78px;background:#e0e0e0;"></div>
<div class="b" style="left:1815px;top:666px;width:1px;height:78px;background:#e0e0e0;"></div>
<div class="b" style="left:1927px;top:666px;width:1px;height:78px;background:#e0e0e0;"></div>
<div class="b" style="left:2012px;top:666px;width:1px;height:78px;background:#e0e0e0;"></div>
<div class="b" style="left:2134px;top:666px;width:1px;height:78px;background:#e0e0e0;"></div>
<div class="b" style="left:2248px;top:666px;width:1px;height:78px;background:#e0e0e0;"></div>
<div class="b" style="left:2338px;top:666px;width:1px;height:78px;background:#e0e0e0;"></div>
<div class="b" style="left:2428px;top:666px;width:1px;height:78px;background:#e0e0e0;"></div>
<div class="t " style="left:920.5px;top:694.50px;font-size:13px;line-height:16px;font-weight:400;color:#383838;letter-spacing:0.12px;">Malowanie na mokro</div>
<div class="b" style="left:920px;top:719px;width:738px;height:1px;background:#9e9e9e;"></div>
<div class="t " style="left:1695px;top:694.50px;font-size:13px;line-height:16px;font-weight:400;color:#383838;letter-spacing:0px;">41,2128</div>
<svg class="b" style="left:1751.5px;top:694px;" width="12" height="22" viewBox="0 0 12 22"><path fill="none" stroke="#424242" stroke-width="1.8" d="M1 6.5L6 1.5L11 6.5M1 14.5L6 19.5L11 14.5"/></svg>
<div class="b" style="left:1695px;top:719px;width:73px;height:1px;background:#9e9e9e;"></div>
<div class="t " style="left:1834.5px;top:694.50px;font-size:13px;line-height:16px;font-weight:400;color:#383838;letter-spacing:0px;">s</div>
<svg class="b" style="left:1883.5px;top:694px;" width="24" height="24" viewBox="0 0 24 24"><path fill="#757575" d="M7 10l5 5 5-5z"/></svg>
<div class="b" style="left:1834px;top:720px;width:75px;height:1px;background:#9e9e9e;"></div>
<div class="t " style="left:1945.5px;top:695.30px;font-size:15px;line-height:18px;font-weight:400;color:#383838;letter-spacing:0px;">PLN</div>
<div class="t " style="left:2031px;top:694.50px;font-size:13px;line-height:16px;font-weight:400;color:#383838;letter-spacing:0px;">80,00</div>
<svg class="b" style="left:2098.5px;top:694px;" width="12" height="22" viewBox="0 0 12 22"><path fill="none" stroke="#424242" stroke-width="1.8" d="M1 6.5L6 1.5L11 6.5M1 14.5L6 19.5L11 14.5"/></svg>
<div class="b" style="left:2031px;top:719px;width:85px;height:1px;background:#9e9e9e;"></div>
<div class="t " style="left:2152.5px;top:694.50px;font-size:13px;line-height:16px;font-weight:400;color:#383838;letter-spacing:0px;">20</div>
<svg class="b" style="left:2186.5px;top:694px;" width="12" height="22" viewBox="0 0 12 22"><path fill="none" stroke="#424242" stroke-width="1.8" d="M1 6.5L6 1.5L11 6.5M1 14.5L6 19.5L11 14.5"/></svg>
<div class="b" style="left:2153px;top:719px;width:50px;height:1px;background:#9e9e9e;"></div>
<div class="t " style="left:2267px;top:695.30px;font-size:15px;line-height:18px;font-weight:400;color:#bdbdbd;letter-spacing:-0.2px;">0,92</div>
<div class="t " style="left:2356.5px;top:695.30px;font-size:15px;line-height:18px;font-weight:400;color:#bdbdbd;letter-spacing:-0.2px;">0,22</div>
<svg class="b" style="left:2447.4px;top:694.2px;" width="22" height="22" viewBox="0 0 24 24"><path fill="#bdbdbd" d="M6 19c0 1.1.9 2 2 2h8c1.1 0 2-.9 2-2V7H6v12zM19 4h-3.5l-1-1h-5l-1 1H5v2h14V4z"/></svg>
</body></html>
